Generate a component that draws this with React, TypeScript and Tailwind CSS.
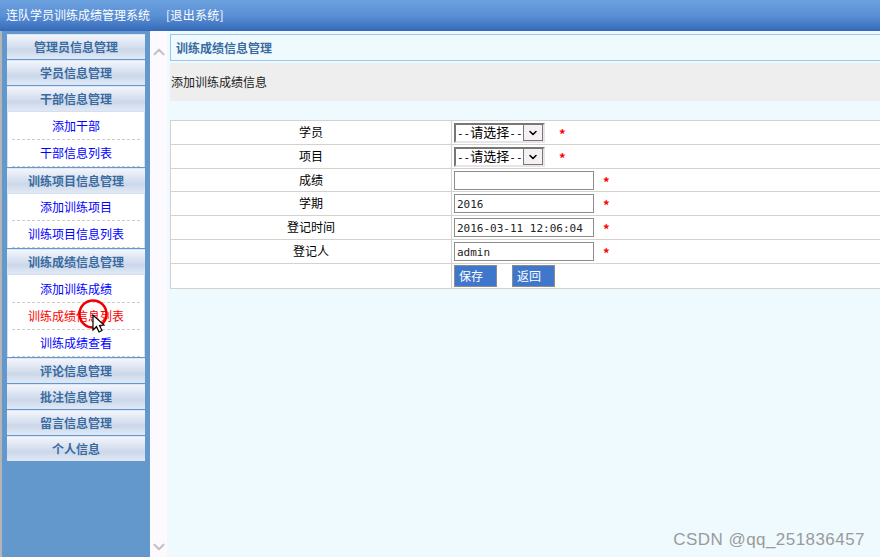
import { ChevronDown, ChevronUp } from "lucide-react";

const cjk = "font-['Noto_Sans_CJK_SC','Liberation_Sans',sans-serif]";

function MenuHead({ label }: { label: string }) {
  return (
    <div className="h-[25px] shrink-0 flex items-center justify-center text-[12px] font-bold text-[#3a6b9f] bg-[linear-gradient(#f2f5fc_0%,#e4eaf6_25%,#cbd8ea_65%,#dfe7f4_100%)] border-y border-[#dce6f4]">
      {label}
    </div>
  );
}

function MenuGroup({ h, items }: { h: string; items: { label: string; active?: boolean }[] }) {
  return (
    <div className={`${h} shrink-0 -mt-px flex flex-col bg-white border-x border-t border-[#d5e0ee]`}>
      {items.map((item) => (
        <div
          key={item.label}
          className={`flex-1 mx-[4px] flex items-center justify-center text-[12px] border-b border-dashed border-[#cccccc] ${
            item.active ? "text-[#ff0000]" : "text-[#0000ff]"
          }`}
        >
          {item.label}
        </div>
      ))}
    </div>
  );
}

function Row({ label, h, children }: { label: string; h: string; children: React.ReactNode }) {
  return (
    <div className={`flex border-b border-[#d4d2cc] ${h}`}>
      <div className="w-[281px] shrink-0 flex items-center justify-center pb-[1px] text-[12px] text-black border-r border-[#d4d2cc]">
        {label}
      </div>
      <div className="flex items-center pl-[2px]">{children}</div>
    </div>
  );
}

function Star({ ml }: { ml: string }) {
  return <span className={`${ml} text-[#ff0000] text-[13px] font-bold leading-none pt-[2px]`}>*</span>;
}

function FakeSelect() {
  return (
    <div className="w-[91px] h-[20px] flex items-center border-2 border-[#777777] border-r-[#e8e4e8] border-b-[#e8e4e8] bg-white text-[13px] text-black">
      <span className="flex-1 pl-[1px] whitespace-nowrap">
        <span className="font-['DejaVu_Sans_Mono',monospace] text-[11px]">--</span>请选择
        <span className="font-['DejaVu_Sans_Mono',monospace] text-[11px]">--</span>
      </span>
      <span className="w-[20px] h-[17px] shrink-0 flex items-center justify-center bg-[#f4f0f4] border border-[#777777]">
        <ChevronDown size={12} strokeWidth={3} className="text-black" />
      </span>
    </div>
  );
}

function Field({ value }: { value?: string }) {
  return (
    <div className="w-[140px] h-[19px] flex items-center pl-[2px] pt-[3px] border border-[#8c8c8c] bg-white text-[11px] text-[#222222] font-['DejaVu_Sans_Mono',monospace] whitespace-nowrap">
      {value}
    </div>
  );
}

function Btn({ label }: { label: string }) {
  return (
    <div className="w-[43px] h-[22px] flex items-center pl-[4px] bg-[#3f77cc] border border-[#8c8c8c] text-white text-[12px]">
      {label}
    </div>
  );
}

export default function App() {
  return (
    <div className={`relative w-[880px] h-[557px] overflow-hidden flex flex-col ${cjk}`}>
      <div className="h-[31px] shrink-0 flex items-center pl-[6px] pb-[1px] text-[12px] text-white bg-[linear-gradient(#6ba1de_0%,#5a90d6_50%,#3569b8_100%)]">
        <span>连队学员训练成绩管理系统</span>
        <span className="ml-[16px] tracking-[0.3px]">[退出系统]</span>
      </div>

      <div className="flex-1 flex min-h-0">
        <div className="w-[2px] bg-[#b5b5b5]" />
        <div className="w-[148px] bg-[#6298cc] pt-[3px] px-[5px] flex flex-col gap-px">
          <MenuHead label="管理员信息管理" />
          <MenuHead label="学员信息管理" />
          <MenuHead label="干部信息管理" />
          <MenuGroup h="h-[56px] pt-[1px]" items={[{ label: "添加干部" }, { label: "干部信息列表" }]} />
          <MenuHead label="训练项目信息管理" />
          <MenuGroup h="h-[55px]" items={[{ label: "添加训练项目" }, { label: "训练项目信息列表" }]} />
          <MenuHead label="训练成绩信息管理" />
          <MenuGroup
            h="h-[83px] pt-[1px]"
            items={[
              { label: "添加训练成绩" },
              { label: "训练成绩信息列表", active: true },
              { label: "训练成绩查看" },
            ]}
          />
          <MenuHead label="评论信息管理" />
          <MenuHead label="批注信息管理" />
          <MenuHead label="留言信息管理" />
          <MenuHead label="个人信息" />
        </div>

        <div className="w-[17px] bg-[#fdfaff] flex flex-col items-center justify-between pt-[12px] pb-[1px]">
          <ChevronUp size={18} strokeWidth={3} className="text-[#c4c4c4]" />
          <ChevronDown size={18} strokeWidth={3} className="text-[#c4c4c4]" />
        </div>

        <div className="flex-1 bg-[#effaff] pl-[3px] pt-[3px] relative">
          <div className="h-[27px] flex items-center pl-[5px] text-[12px] font-bold text-[#3a6b9f] border-y border-l border-[#9cc6ee]">
            训练成绩信息管理
          </div>
          <div className="h-[38px] mt-[2px] pl-[1px] bg-[#eeeeee] flex items-center text-[12px] text-[#222222]">
            添加训练成绩信息
          </div>
          <div className="mt-[19px] bg-white border-y border-l border-[#d4d2cc]">
            <Row label="学员" h="h-[24px]">
              <FakeSelect />
              <Star ml="ml-[14px]" />
            </Row>
            <Row label="项目" h="h-[24px]">
              <FakeSelect />
              <Star ml="ml-[14px]" />
            </Row>
            <Row label="成绩" h="h-[23px]">
              <Field />
              <Star ml="ml-[9px]" />
            </Row>
            <Row label="学期" h="h-[24px]">
              <Field value="2016" />
              <Star ml="ml-[9px]" />
            </Row>
            <Row label="登记时间" h="h-[24px]">
              <Field value="2016-03-11 12:06:04" />
              <Star ml="ml-[9px]" />
            </Row>
            <Row label="登记人" h="h-[24px]">
              <Field value="admin" />
              <Star ml="ml-[9px]" />
            </Row>
            <div className="flex h-[24px]">
              <div className="w-[281px] shrink-0 border-r border-[#d4d2cc]" />
              <div className="flex items-center pl-[2px] gap-[15px]">
                <Btn label="保存" />
                <Btn label="返回" />
              </div>
            </div>
          </div>

          <div className="absolute right-[15px] bottom-[6px] text-[17px] leading-[22px] text-[#9a9a9a] font-['Liberation_Sans',sans-serif] tracking-[0.45px]">
            CSDN @qq_251836457
          </div>
        </div>
      </div>

      <svg className="absolute left-[76px] top-[299px]" width="36" height="36" viewBox="0 0 36 36">
        <circle cx="17" cy="15" r="13.5" fill="none" stroke="#f00000" strokeWidth="2.5" />
        <path d="M17 16 L17 31 L20.5 27.5 L23 33 L26 31.5 L23.5 26.5 L28 26 Z" fill="#ffffff" stroke="#000000" strokeWidth="1.2" />
      </svg>
    </div>
  );
}
